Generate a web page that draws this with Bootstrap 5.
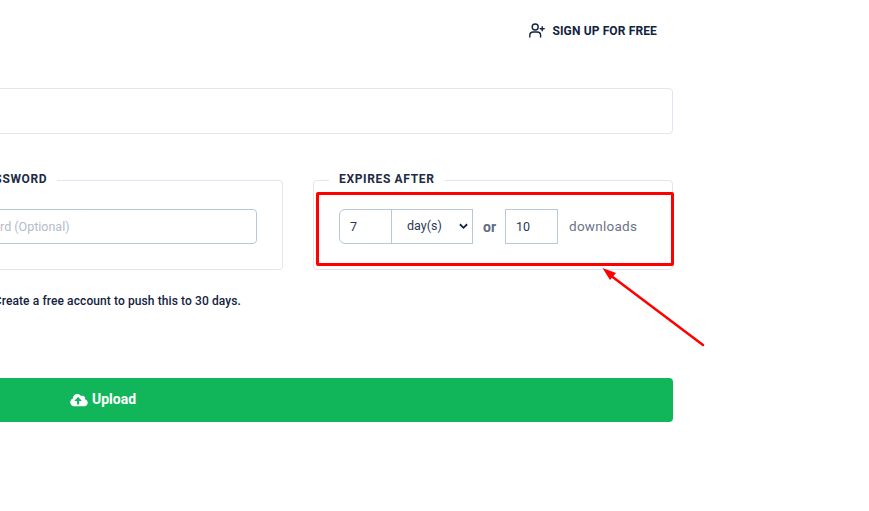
<!DOCTYPE html>
<html lang="en">
<head>
<meta charset="utf-8">
<title>Upload</title>
<link rel="stylesheet" href="https://cdn.jsdelivr.net/npm/bootstrap@5.3.0/dist/css/bootstrap.min.css">
<style>
html,body{height:100%;overflow:hidden;background:#fff}
body{font-family:Roboto,"Liberation Sans",sans-serif;color:#1d2b45;position:relative}
.sheet{width:1140px;margin-left:-467px}
.topbar{height:60px;padding:1px 16px 0 0}
.signup{font-size:12px;font-weight:700;letter-spacing:.13px;color:#13233f;text-decoration:none;gap:7px}
.signup svg{width:16px;height:15px}
.titlebox{height:46px;margin-top:28px;border:1px solid #e3e4f0;border-radius:4px}
.fields{--bs-gutter-x:30px;margin-top:37px}
.fbox{border:1px solid #e3e4f0;border-radius:4px;padding:20px 25px 25px;margin:0;min-width:0}
.fbox legend{float:none;width:auto;font-size:12px;line-height:16px;font-weight:700;letter-spacing:.65px;color:#1d2b45;text-transform:uppercase;margin:0 0 0 -10px;padding:0 10px 2px}
.fld{height:35px;border:1px solid #b9c8d9;font-size:12.5px;color:#2b3a55;padding:0 10px;background-color:#fff;box-shadow:none}
.fld::placeholder{color:#b4bccb}
.pwfld{border-radius:4px;padding-left:6px}
.input-group>.num,.num{width:53px;flex:none}
.input-group>.unit{width:82px;flex:none;margin-left:-1px;padding:0 0 0 15px;border-radius:0;background-image:url("data:image/svg+xml,%3csvg xmlns='http://www.w3.org/2000/svg' viewBox='0 0 10 7'%3e%3cpath fill='none' stroke='%2313233f' stroke-width='2' d='M1 1l4 4 4-4'/%3e%3c/svg%3e");background-size:9px 7px;background-position:right 4px center}
.plainnum{border-radius:0}
.orword{font-size:14px;font-weight:700;color:#5f6b84;margin:0 9px 0 10px}
.dlword{font-size:13.5px;color:#6c7488;letter-spacing:.25px;margin-left:11px}
.noterow{--bs-gutter-x:30px;margin-top:22px}
.note{font-size:12px;font-weight:500;letter-spacing:.1px;color:#13233f;padding-right:57px;line-height:18px}
.upbtn{height:44px;margin-top:68px;padding:0 0 1px;background:#12b65a;border:0;border-radius:4px;color:#fff;font-size:14px;font-weight:700}
.upbtn:hover{background:#12b65a;color:#fff}
.upbtn svg{width:18px;height:14px}
.mark-box{position:absolute;left:316px;top:192px;width:358px;height:74px;border:3px solid #f00;border-radius:2px;pointer-events:none}
.mark-arrow{position:absolute;left:590px;top:255px;width:130px;height:100px;pointer-events:none}
</style>
</head>
<body>
<div class="sheet">
  <div class="topbar d-flex justify-content-end align-items-center">
    <a class="signup d-inline-flex align-items-center" href="#">
      <svg viewBox="0 0 16 15" fill="none" stroke="#13233f" stroke-width="1.4" stroke-linecap="round"><circle cx="6.2" cy="4" r="3"/><path d="M.8 14v-1.5c0-2 1.5-3.5 3.5-3.5h3.8c2 0 3.5 1.5 3.5 3.5V14"/><path d="M13.2 3.8v4M11.2 5.8h4"/></svg>
      <span>SIGN UP FOR FREE</span>
    </a>
  </div>
  <div class="titlebox"></div>
  <div class="row fields">
    <div class="col-4"></div>
    <div class="col-4">
      <fieldset class="fbox">
        <legend>Add password</legend>
        <input class="form-control fld pwfld" type="text" placeholder="Password (Optional)">
      </fieldset>
    </div>
    <div class="col-4">
      <fieldset class="fbox">
        <legend>Expires after</legend>
        <div class="d-flex align-items-center">
          <div class="input-group w-auto flex-nowrap">
            <input class="form-control fld num" type="text" value="7">
            <select class="form-select fld unit"><option>day(s)</option></select>
          </div>
          <span class="orword lh-1">or</span>
          <input class="form-control fld num plainnum" type="text" value="10">
          <span class="dlword">downloads</span>
        </div>
      </fieldset>
    </div>
  </div>
  <div class="row noterow">
    <div class="col-4"></div>
    <div class="col-4 text-end note">Create a free account to push this to 30 days.</div>
  </div>
  <button class="btn upbtn w-100 d-flex align-items-center justify-content-center gap-1" type="button">
    <svg viewBox="0 0 640 512" fill="#fff"><path d="M537.6 226.6c4.1-10.7 6.4-22.4 6.4-34.6 0-53-43-96-96-96-19.7 0-38.1 6-53.3 16.2C367 64.2 315.3 32 256 32c-88.4 0-160 71.6-160 160 0 2.7.1 5.4.2 8.1C40.2 219.8 0 273.2 0 336c0 79.5 64.5 144 144 144h368c70.7 0 128-57.3 128-128 0-61.9-44-113.6-102.4-125.4zM393.4 288H328v112c0 8.8-7.2 16-16 16h-48c-8.8 0-16-7.2-16-16V288h-65.4c-14.3 0-21.4-17.2-11.3-27.3l105.4-105.4c6.2-6.2 16.4-6.2 22.6 0l105.4 105.4c10.1 10.1 2.9 27.3-11.3 27.3z"/></svg>
    <span>Upload</span>
  </button>
</div>
<div class="mark-box"></div>
<svg class="mark-arrow" viewBox="0 0 130 100"><path d="M113 90 L20 20" stroke="#f00" stroke-width="2.5" stroke-linecap="round"/><path d="M12.5 13 L26 18 L20 25 Z" fill="#f00"/></svg>
</body>
</html>
